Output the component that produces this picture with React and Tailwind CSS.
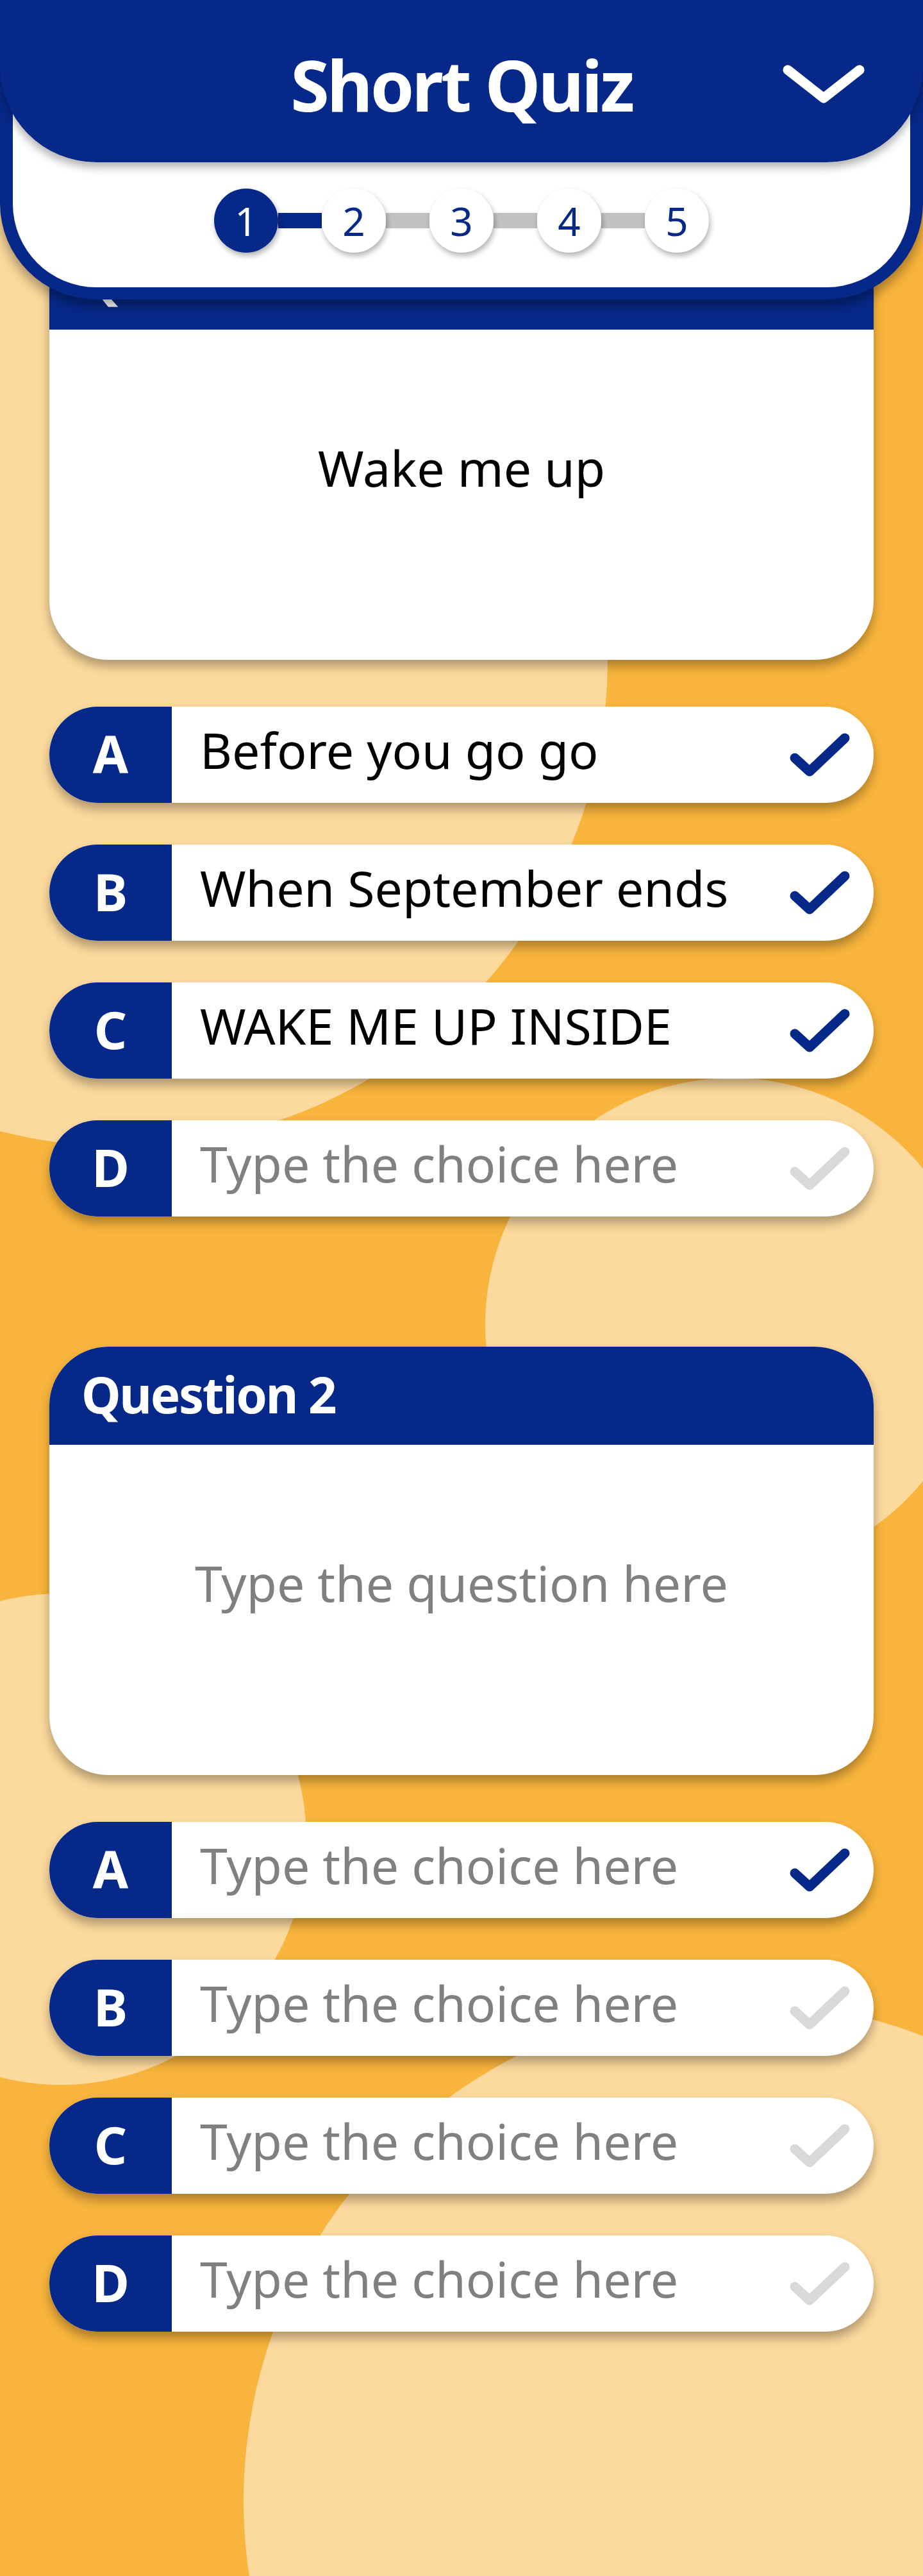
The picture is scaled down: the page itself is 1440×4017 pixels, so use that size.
import React from 'react';

const choices1 = [
  { l: 'A', t: 'Before you go go', filled: true, active: true },
  { l: 'B', t: 'When September ends', filled: true, active: true },
  { l: 'C', t: 'WAKE ME UP INSIDE', filled: true, active: true },
  { l: 'D', t: 'Type the choice here', filled: false, active: false },
];
const choices2 = [
  { l: 'A', t: 'Type the choice here', filled: false, active: true },
  { l: 'B', t: 'Type the choice here', filled: false, active: false },
  { l: 'C', t: 'Type the choice here', filled: false, active: false },
  { l: 'D', t: 'Type the choice here', filled: false, active: false },
];

function Check({ active }) {
  return (
    <svg width="96" height="70" viewBox="0 0 96 70" fill="none" className="shrink-0">
      <path
        d="M8 40 L31 61 L86 9"
        stroke={active ? '#062888' : '#d9d9d9'}
        strokeWidth="15"
        strokeLinecap="round"
        strokeLinejoin="round"
      />
    </svg>
  );
}

function Choice({ c }) {
  return (
    <div className="flex h-[150px] rounded-full overflow-hidden bg-white shadow-[0_10px_16px_rgba(0,0,0,0.3)]">
      <div className="w-[191px] shrink-0 bg-[#062888] flex items-center justify-center text-white font-bold text-[80px] leading-none pb-[5px]">
        {c.l}
      </div>
      <div className="flex-1 flex items-center pl-[44px] pr-[35px]">
        <span
          className={
            'flex-1 text-[77px] leading-none pb-[16px] whitespace-nowrap ' +
            (c.filled ? 'text-black' : 'text-[#808080]')
          }
        >
          {c.t}
        </span>
        <Check active={c.active} />
      </div>
    </div>
  );
}

function Card({ title, text, filled }) {
  return (
    <div className="h-[668px] flex flex-col rounded-[92px] overflow-hidden bg-white shadow-[0_10px_16px_rgba(0,0,0,0.3)]">
      <div className="h-[153px] shrink-0 bg-[#062888] flex items-center pl-[50px] pb-[6px] text-white font-bold text-[78px] leading-none tracking-[-0.03em]">
        {title}
      </div>
      <div
        className={
          'flex-1 flex items-center justify-center pb-[84px] text-[77px] leading-none ' +
          (filled ? 'text-black' : 'text-[#808080]')
        }
      >
        {text}
      </div>
    </div>
  );
}

function Question({ n, text, filled, choices }) {
  return (
    <div className="flex flex-col">
      <Card title={'Question ' + n} text={text} filled={filled} />
      <div className="mt-[73px] flex flex-col gap-[65px]">
        {choices.map((c) => (
          <Choice key={c.l} c={c} />
        ))}
      </div>
    </div>
  );
}

function Step({ n, active }) {
  return (
    <div
      className={
        'w-[100px] h-[100px] rounded-full flex items-center justify-center text-[62px] leading-none shadow-[2px_5px_8px_rgba(0,0,0,0.3)] relative z-10 ' +
        (active ? 'bg-[#062888] text-white' : 'bg-white text-[#062888]')
      }
    >
      {n}
    </div>
  );
}

function Line({ active }) {
  return <div className={'w-[68px] h-[24px] ' + (active ? 'bg-[#062888]' : 'bg-[#c1c1c1]')} />;
}

function Header() {
  return (
    <div className="absolute top-0 left-0 right-0 z-30">
      <div className="bg-[#062888] px-5 pb-[19px] rounded-b-[150px] shadow-[0_10px_18px_rgba(0,0,0,0.35)]">
        <div className="bg-white rounded-b-[130px]">
          <div className="-mx-5 h-[253px] bg-[#062888] rounded-b-[150px] shadow-[0_8px_14px_rgba(0,0,0,0.3)] grid grid-cols-[1fr_auto_1fr] items-center relative z-10">
            <div />
            <div className="text-white font-bold text-[110px] leading-none tracking-[-0.035em] pt-[8px]">
              Short Quiz
            </div>
            <div className="justify-self-end mr-[86px] flex">
              <svg width="140" height="80" viewBox="0 0 140 80" fill="none">
                <path
                  d="M15 22 L71 66 L127 22"
                  stroke="white"
                  strokeWidth="15"
                  strokeLinecap="round"
                  strokeLinejoin="round"
                />
              </svg>
            </div>
          </div>
          <div className="h-[195px] flex items-center justify-center pb-[14px]">
            <Step n="1" active />
            <Line active />
            <Step n="2" />
            <Line />
            <Step n="3" />
            <Line />
            <Step n="4" />
            <Line />
            <Step n="5" />
          </div>
        </div>
      </div>
    </div>
  );
}

export default function App() {
  return (
    <div className="relative w-full h-[4017px] overflow-hidden bg-[#f8b43c] font-['Noto_Sans',sans-serif]">
      <div className="absolute left-[-568px] top-[272px] w-[1516px] h-[1516px] rounded-full bg-[#fcd99d]" />
      <div className="absolute left-[757px] top-[1681px] w-[770px] h-[770px] rounded-full bg-[#fcd99d]" />
      <div className="absolute left-[-288px] top-[2485px] w-[766px] h-[766px] rounded-full bg-[#fcd99d]" />
      <div className="absolute left-[380px] top-[3122px] w-[1556px] h-[1556px] rounded-full bg-[#fcd99d]" />

      <Header />

      <div className="relative z-10 px-[77px] pt-[361px] flex flex-col gap-[203px]">
        <Question n={1} text="Wake me up" filled choices={choices1} />
        <Question n={2} text="Type the question here" filled={false} choices={choices2} />
      </div>
    </div>
  );
}
